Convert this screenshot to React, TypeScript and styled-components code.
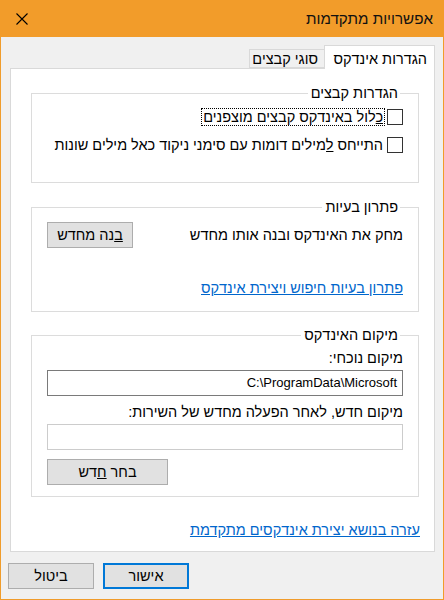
import React from 'react';
import styled, { createGlobalStyle } from 'styled-components';

const GlobalStyle = createGlobalStyle`
  html, body {
    margin: 0;
    padding: 0;
  }
  body {
    font-family: "Liberation Sans", "DejaVu Sans", sans-serif;
    font-size: 14.5px;
    color: #000;
    background: #f0f0f0;
  }
  * {
    box-sizing: border-box;
  }
`;

const Window = styled.div`
  width: 444px;
  height: 600px;
  direction: rtl;
  background: #f0f0f0;
  border: 1px solid #f09c2b;
  border-top: none;
  display: flex;
  flex-direction: column;
`;

const TitleBar = styled.div`
  height: 37px;
  margin: 0 -1px;
  background: #f29c2a;
  display: flex;
  align-items: center;
  justify-content: space-between;
  padding: 0 11px 1px 16px;
`;

const Title = styled.div`
  font-size: 15.2px;
  color: #111;
`;

const CloseButton = styled.button`
  width: 12px;
  height: 12px;
  padding: 0;
  border: none;
  background: none;
  display: flex;
  margin-top: 2px;
`;

const Body = styled.div`
  flex: 1;
  display: flex;
  flex-direction: column;
  padding: 9px 8px 9px 9px;
`;

const TabStrip = styled.div`
  height: 23px;
  display: flex;
  align-items: flex-end;
  margin-bottom: -1px;
  position: relative;
  z-index: 1;
`;

const Tab = styled.div<{ $active?: boolean }>`
  height: ${(p) => (p.$active ? '24px' : '19px')};
  margin-bottom: ${(p) => (p.$active ? '0' : '1px')};
  padding: ${(p) => (p.$active ? '2px 7px 0 0' : '0 6px 0 0')};
  width: ${(p) => (p.$active ? '111px' : '75px')};
  background: ${(p) => (p.$active ? '#fff' : '#f0f0f0')};
  border: 1px solid #d9d9d9;
  border-bottom: ${(p) => (p.$active ? 'none' : '1px solid #d9d9d9')};
  border-right: ${(p) => (p.$active ? '1px solid #d9d9d9' : 'none')};
  display: flex;
  align-items: center;
  white-space: nowrap;
`;

const Panel = styled.div`
  height: 484px;
  background: #fff;
  border: 1px solid #d9d9d9;
  padding: 15px 15px 0 20px;
  display: flex;
  flex-direction: column;
`;

const Group = styled.fieldset<{ $height: number; $gap?: number }>`
  margin: ${(p) => p.$gap ?? 0}px 0 0 0;
  padding: 0 15px 0 15px;
  height: ${(p) => p.$height}px;
  border: 1px solid #dcdcdc;
  min-width: 0;
`;

const Legend = styled.legend`
  padding: 0 2px 0 3px;
  margin-right: 3px;
  line-height: 18px;
  height: 18px;
`;

const CheckRow = styled.label<{ $top: number }>`
  display: flex;
  align-items: center;
  gap: 3px;
  margin-top: ${(p) => p.$top}px;
  white-space: nowrap;
`;

const Box = styled.span`
  width: 16px;
  height: 16px;
  border: 1px solid #333;
  background: #fff;
  flex-shrink: 0;
`;

const CheckText = styled.span<{ $focused?: boolean }>`
  line-height: 16px;
  padding: 0 1px 0 1px;
  outline: ${(p) => (p.$focused ? '1px dotted #000' : 'none')};
  outline-offset: 0;
`;

const ActionRow = styled.div`
  display: flex;
  align-items: center;
  justify-content: space-between;
  margin-top: 6px;
`;

const Button = styled.button<{ $width: number; $default?: boolean }>`
  width: ${(p) => p.$width}px;
  height: 26px;
  font-family: inherit;
  font-size: 14.5px;
  color: #000;
  background: #e1e1e1;
  border: ${(p) => (p.$default ? '2px solid #0078d7' : '1px solid #adadad')};
  padding: 0;
  direction: rtl;
`;

const Link = styled.a<{ $top: number }>`
  display: block;
  align-self: flex-start;
  margin-top: ${(p) => p.$top}px;
  color: #0066cc;
  text-decoration: underline;
  white-space: nowrap;
`;

const FieldLabel = styled.div<{ $top: number }>`
  margin-top: ${(p) => p.$top}px;
  line-height: 18px;
`;

const PathInput = styled.div<{ $dim?: boolean }>`
  margin-top: 3px;
  height: 26px;
  border: 1px solid ${(p) => (p.$dim ? '#cccccc' : '#7a7a7a')};
  background: #fff;
  direction: ltr;
  text-align: right;
  padding: 0 5px;
  line-height: 24px;
  font-size: 13px;
  font-family: "Liberation Sans", sans-serif;
`;

const BrowseRow = styled.div`
  margin-top: 9px;
  display: flex;
  justify-content: flex-end;
`;

const HelpLink = styled(Link)`
  margin-right: -1px;
`;

const Footer = styled.div`
  margin-top: 11px;
  margin-left: -2px;
  display: flex;
  justify-content: flex-end;
  gap: 9px;
`;

const App: React.FC = () => {
  return (
    <>
      <GlobalStyle />
      <Window>
        <TitleBar>
          <Title>אפשרויות מתקדמות</Title>
          <CloseButton aria-label="סגור">
            <svg width="12" height="12" viewBox="0 0 12 12">
              <path d="M0.5 0.5 L11.5 11.5 M11.5 0.5 L0.5 11.5" stroke="#000" strokeWidth="1.1" fill="none" />
            </svg>
          </CloseButton>
        </TitleBar>
        <Body>
          <TabStrip>
            <Tab $active>הגדרות אינדקס</Tab>
            <Tab>סוגי קבצים</Tab>
          </TabStrip>
          <Panel>
            <Group $height={99}>
              <Legend>הגדרות קבצים</Legend>
              <CheckRow $top={7}>
                <Box />
                <CheckText $focused>
                  <u>כ</u>לול באינדקס קבצים מוצפנים
                </CheckText>
              </CheckRow>
              <CheckRow $top={12}>
                <Box />
                <CheckText>
                  התייחס <u>ל</u>מילים דומות עם סימני ניקוד כאל מילים שונות
                </CheckText>
              </CheckRow>
            </Group>
            <Group $height={114} $gap={15}>
              <Legend>פתרון בעיות</Legend>
              <ActionRow>
                <span>מחק את האינדקס ובנה אותו מחדש</span>
                <Button $width={86}>
                  <u>ב</u>נה מחדש
                </Button>
              </ActionRow>
              <Link $top={32}>פתרון בעיות חיפוש ויצירת אינדקס</Link>
            </Group>
            <Group $height={171} $gap={14}>
              <Legend>מיקום האינדקס</Legend>
              <FieldLabel $top={5}>מיקום נוכחי:</FieldLabel>
              <PathInput>C:\ProgramData\Microsoft</PathInput>
              <FieldLabel $top={7}>מיקום חדש, לאחר הפעלה מחדש של השירות:</FieldLabel>
              <PathInput $dim />
              <BrowseRow>
                <Button $width={121}>
                  בחר <u>ח</u>דש
                </Button>
              </BrowseRow>
            </Group>
            <HelpLink $top={25}>עזרה בנושא יצירת אינדקסים מתקדמת</HelpLink>
          </Panel>
          <Footer>
            <Button $width={86} $default>
              אישור
            </Button>
            <Button $width={86}>ביטול</Button>
          </Footer>
        </Body>
      </Window>
    </>
  );
};

export default App;
